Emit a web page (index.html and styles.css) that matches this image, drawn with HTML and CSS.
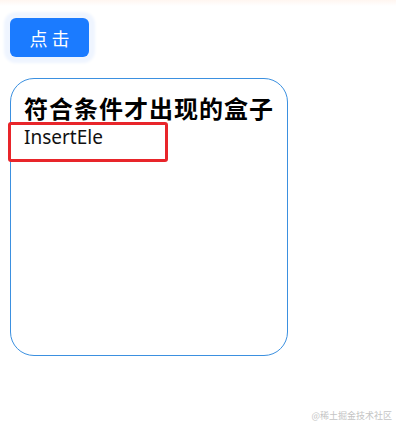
FILE: index.html
```html
<!DOCTYPE html>
<html>
<head>
<meta charset="utf-8">
<link rel="stylesheet" href="styles.css">
</head>
<body>
<div class="topstrip"></div>
<div class="page">
  <button class="btn">点击</button>
  <div class="box">
    <h2 class="title">符合条件才出现的盒子</h2>
    <div class="insert">InsertEle</div>
  </div>
</div>
<div class="marker"></div>
<div class="watermark">@稀土掘金技术社区</div>
</body>
</html>
```
FILE: styles.css
```css
html, body {
  margin: 0;
  padding: 0;
  background: #ffffff;
  width: 396px;
  height: 426px;
  overflow: hidden;
  position: relative;
  font-family: "Noto Sans", "Noto Sans CJK SC", sans-serif;
}
.topstrip {
  height: 6px;
  background: linear-gradient(to bottom, #fff6f0, #ffffff);
}
.page {
  padding: 12px 0 0 10px;
  display: flex;
  flex-direction: column;
  align-items: flex-start;
}
.btn {
  width: 79px;
  height: 39px;
  border: none;
  border-radius: 6px;
  background: #1b7bff;
  color: #ffffff;
  font-family: "Noto Sans CJK SC", sans-serif;
  font-size: 18px;
  letter-spacing: 4px;
  padding: 0 0 0 4px;
  box-shadow: 0 0 3px 6px #eff5ff;
}
.box {
  margin-top: 21px;
  width: 250px;
  height: 276px;
  border: 1px solid #3b90e0;
  border-radius: 24px;
  padding: 0 13px;
}
.title {
  margin: 13px 0 0 0;
  font-family: "Noto Sans CJK SC", sans-serif;
  font-weight: 700;
  font-size: 24px;
  line-height: 32px;
  color: #000;
  letter-spacing: 1px;
  white-space: nowrap;
}
.insert {
  font-family: "Noto Sans", "Noto Sans CJK SC", sans-serif;
  font-size: 19px;
  line-height: 22px;
  color: #111;
  margin-top: 2px;
}
.marker {
  position: absolute;
  left: 8px;
  top: 122px;
  width: 154px;
  height: 34px;
  border: 3px solid #e8252a;
  border-radius: 3px;
}
.watermark {
  position: absolute;
  right: 4px;
  bottom: 4px;
  font-family: "Noto Sans CJK SC", sans-serif;
  font-size: 9px;
  color: #c4c4c4;
}
```
